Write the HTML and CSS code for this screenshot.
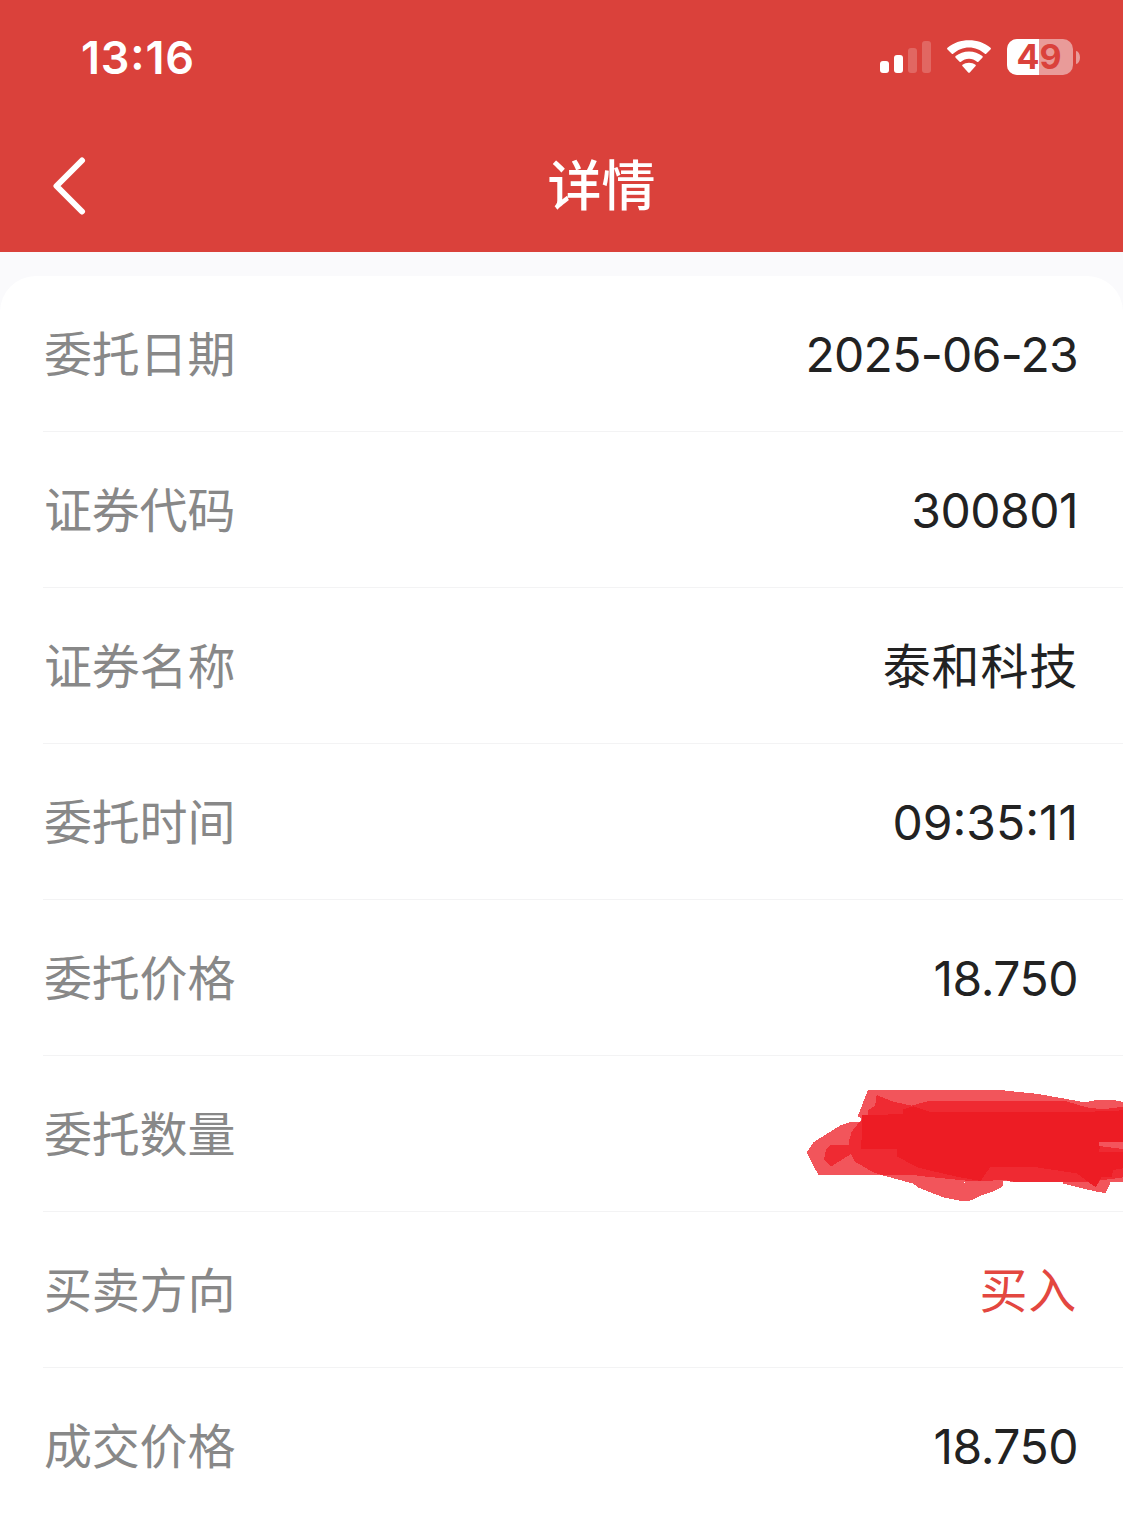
FILE: index.html
```html
<!DOCTYPE html>
<html lang="zh-CN">
<head>
    <meta charset="UTF-8">
    <meta name="viewport" content="width=device-width, initial-scale=1.0">
    <title>详情</title>
    <link rel="stylesheet" href="styles.css">
</head>
<body>
    <header class="header">
        <div class="status-bar">
            <span class="time">13:16</span>
            <div class="status-icons">
                <svg class="signal" width="52" height="32" viewBox="0 0 52 32" fill="#fff">
                    <rect x="0" y="20" width="9" height="12" rx="3"/>
                    <rect x="14" y="14" width="9" height="18" rx="3"/>
                    <rect x="28" y="7" width="9" height="25" rx="3" opacity=".2"/>
                    <rect x="42" y="0" width="9" height="32" rx="3" opacity=".2"/>
                </svg>
                <svg class="wifi" width="46" height="34" viewBox="0 0 46 34" fill="#fff">
                    <path d="M23 7.4c5.900 0 11.600 2.300 15.900 6.400.4.400.9.400 1.300 0l4.300-4.300c.6-.6.6-1.200 0-1.700C38.500 2.700 31 .3 23 .3S7.500 2.700 1.500 7.800c-.6.500-.6 1.100 0 1.700l4.300 4.300c.4.400.9.400 1.300 0C11.400 9.700 17.100 7.400 23 7.400z"/>
                    <path d="M23 18.700c3.200 0 5.600 1.100 8 3 .5.400 1 .4 1.400 0l4-4c.5-.5.5-1.100 0-1.600C32.700 13.200 28 11.500 23 11.500S13.300 13.200 9.600 16.100c-.5.500-.5 1.100 0 1.600l4 4c.4.400.9.400 1.400 0 2.400-1.900 4.800-3 8-3z"/>
                    <path d="M29.600 26.100c.4-.5.400-1-.1-1.400-1.700-1.300-4-2-6.500-2s-4.800.7-6.500 2c-.5.4-.5.900-.1 1.400l5.800 6.300c.5.500 1.100.5 1.600 0z"/>
                </svg>
                <div class="battery">
                    <div class="battery-body">
                        <span class="battery-level" style="width: 49%"></span>
                        <span class="battery-text">49</span>
                    </div>
                    <span class="battery-cap"></span>
                </div>
            </div>
        </div>
        <nav class="nav-bar">
            <a class="back" href="#" aria-label="返回">
                <svg width="34" height="58" viewBox="0 0 34 58" fill="none" stroke="#fff" stroke-width="6" stroke-linecap="round" stroke-linejoin="round">
                    <path d="M30 3.500L4.500 29 30 54.500"/>
                </svg>
            </a>
            <h1 class="title">详情</h1>
        </nav>
    </header>

    <main class="card">
        <div class="row">
            <span class="label">委托日期</span>
            <span class="value date">2025-06-23</span>
        </div>
        <div class="row">
            <span class="label">证券代码</span>
            <span class="value">300801</span>
        </div>
        <div class="row">
            <span class="label">证券名称</span>
            <span class="value cjk">泰和科技</span>
        </div>
        <div class="row">
            <span class="label">委托时间</span>
            <span class="value clock">09:35:11</span>
        </div>
        <div class="row">
            <span class="label">委托价格</span>
            <span class="value">18.750</span>
        </div>
        <div class="row">
            <span class="label">委托数量</span>
            <!-- marker strokes over the hidden amount -->
            <svg class="scribble" width="333" height="130" viewBox="0 0 999 390" fill="#ed1c24" shape-rendering="crispEdges">
                <path fill-opacity=".75" d="M234 30H630L745 42L885 67L920 60H970L999 66V306H680L640 303L637 320L615 332L575 346L540 362L508 362L460 352L385 323L370 311L285 288L275 285H85L50 217L70 187L150 137L180 126H213V115L203 109z"/>
                <path fill-opacity=".75" d="M820 306H962L947 339L915 334L820 311z"/>
                <path fill-opacity=".75" d="M260 45L310 65L365 77L415 63H825L890 82L940 88L999 80V292L960 298L930 300L917 322L905 306H680L640 300L600 302H530L410 290L370 285H275L250 277L195 245L183 222L122 260L102 240L108 210L120 195H178V180L185 155L215 118L235 104V90L255 78z"/>
                <path d="M216 106L340 102V88L370 79L420 96H880L999 91V185L930 186L928 215L999 216V265L970 270L965 290H935L917 322L860 280L740 262H600L572 303L500 290L384 263L322 230V207L214 208z"/>
                <path fill="#f4545c" d="M927 187L999 185V207L927 198z"/>
                <path fill="#fff" d="M522 306h3v3h-3z"/>
            </svg>
        </div>
        <div class="row">
            <span class="label">买卖方向</span>
            <span class="value cjk buy">买入</span>
        </div>
        <div class="row">
            <span class="label">成交价格</span>
            <span class="value">18.750</span>
        </div>
    </main>
</body>
</html>
```
FILE: styles.css
```css
* {
    box-sizing: border-box;
}
body {
    margin: 0;
    background-color: #fafafc;
    font-family: Inter, "Noto Sans CJK SC", sans-serif;
    color: #222;
}
.header {
    height: 252px;
    background-color: #da413b;
    color: #fff;
}
.status-bar {
    display: flex;
    justify-content: space-between;
    align-items: center;
    height: 114px;
    padding: 0 43px 0 81px;
}
.time {
    padding-top: 2px;
    font-size: 45px;
    font-weight: 600;
    line-height: 54px;
    letter-spacing: 0.8px;
    font-feature-settings: "case";
}
.status-icons {
    display: flex;
    align-items: center;
}
.signal {
    margin-right: 14px;
}
.wifi {
    margin-right: 15px;
}
.battery {
    display: flex;
    align-items: center;
}
.battery-body {
    position: relative;
    width: 66px;
    height: 36px;
    border-radius: 10px;
    background-color: #e99b99;
}
.battery-level {
    position: absolute;
    top: 0;
    left: 0;
    height: 100%;
    border-radius: 10px 0 0 10px;
    background-color: #fff;
}
.battery-text {
    position: relative;
    display: block;
    padding-right: 2px;
    color: #da413b;
    font-size: 34px;
    font-weight: 700;
    line-height: 36px;
    text-align: center;
}
.battery-cap {
    width: 4px;
    height: 13px;
    margin-left: 3px;
    border-radius: 0 4px 4px 0 / 0 6.5px 6.5px 0;
    background-color: #e99b99;
}
.nav-bar {
    display: grid;
    grid-template-columns: 80px 1fr;
    align-items: center;
    height: 138px;
    padding-top: 6px;
}
.back {
    display: flex;
    padding-left: 52px;
}
.back svg {
    flex: none;
}
.title {
    margin: 0;
    padding-top: 2px;
    font-size: 54px;
    font-weight: 500;
    line-height: 72px;
    text-align: center;
}
.card {
    margin-top: 24px;
    border-radius: 36px 36px 0 0;
    background-color: #fff;
}
.row {
    display: flex;
    justify-content: space-between;
    align-items: center;
    height: 156px;
    margin-left: 43px;
    padding-right: 45px;
    border-bottom: 1px solid #f3f3f4;
}
.row:last-child {
    height: 149px;
    padding-bottom: 0;
    border-bottom: none;
}
.row:last-child .label,
.row:last-child .value {
    padding-top: 8px;
}
.label {
    padding: 2px 0 0 1px;
    color: #888;
    font-size: 48px;
    line-height: 72px;
    letter-spacing: -0.2px;
}
.value {
    padding-top: 2px;
    font-size: 48px;
    line-height: 72px;
    letter-spacing: -0.5px;
}
.date {
    letter-spacing: -0.7px;
}
.clock {
    letter-spacing: 0;
}
.cjk {
    letter-spacing: 0.8px;
}
.buy {
    padding-right: 1px;
    color: #e34740;
}
.scribble {
    flex: none;
    margin: 22px -45px 0 0;
}
```
